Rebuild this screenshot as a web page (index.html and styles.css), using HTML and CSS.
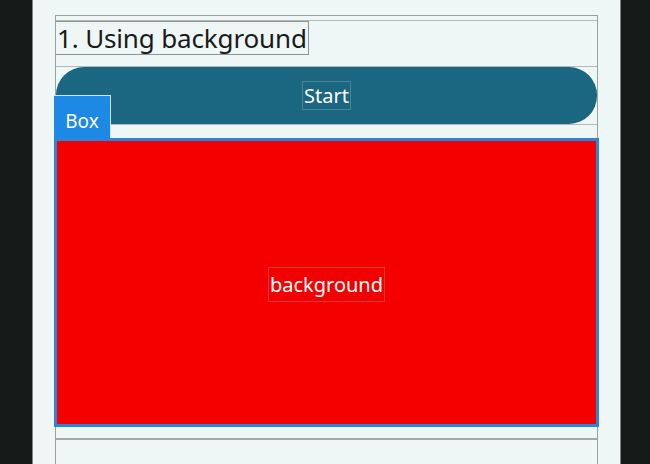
FILE: index.html
```html
<!DOCTYPE html>
<html>
<head>
<meta charset="utf-8">
<link rel="stylesheet" href="styles.css">
</head>
<body>
<div class="phone">
  <div class="column">
    <div class="title-row">
      <div class="title">1. Using background</div>
    </div>
    <div class="btn-row">
      <div class="btn"><span class="btn-text">Start</span></div>
    </div>
    <div class="box-wrap">
      <div class="box-tag">Box</div>
      <div class="box"><span class="box-text">background</span></div>
    </div>
    <div class="next-row"></div>
  </div>
</div>
</body>
</html>
```
FILE: styles.css
```css
html, body {
  margin: 0;
  padding: 0;
}
body {
  width: 650px;
  height: 464px;
  overflow: hidden;
  background: #161b19;
  font-family: "Noto Sans", "Open Sans", sans-serif;
}
.phone {
  margin-left: 32px;
  width: 589px;
  height: 464px;
  background: #eff7f6;
  border-left: 1px solid #7d8381;
  border-right: 1px solid #7d8381;
  padding-top: 15px;
  box-sizing: border-box;
}
.column {
  margin-left: 22px;
  width: 543px;
  height: 470px;
  border: 1px solid #9ba19f;
  border-bottom: none;
  box-sizing: border-box;
  display: flex;
  flex-direction: column;
}
.title-row {
  margin-top: 4px;
  border-top: 1px solid #b3b9b7;
  border-bottom: 1px solid #b3b9b7;
  padding-bottom: 11px;
}
.title {
  display: inline-block;
  height: 34px;
  box-sizing: border-box;
  border: 1px solid #8e9492;
  border-left: none;
  padding: 0 1px 0 1px;
  font-size: 26px;
  line-height: 32px;
  letter-spacing: -0.15px;
  color: #1a1a1a;
}
.btn-row {
  border-bottom: 1px solid #b3b9b7;
}
.btn {
  height: 57px;
  border-radius: 28px;
  background: #1b6680;
  display: flex;
  align-items: center;
  justify-content: center;
}
.btn-text {
  color: #fff;
  font-size: 20px;
  line-height: 27px;
  padding: 0 1px;
  border: 1px solid #4c8497;
}
.box-wrap {
  position: relative;
  margin-top: 13px;
  margin-left: -2px;
  margin-right: -2px;
}
.box {
  height: 289px;
  box-sizing: border-box;
  border: 3px solid #2a86dd;
  background: #f50000;
  display: flex;
  align-items: center;
  justify-content: center;
  padding-top: 4px;
}
.box-text {
  color: #fff;
  font-size: 20px;
  line-height: 33px;
  padding: 0 1px;
  border: 1px solid #d23a3a;
}
.box-tag {
  position: absolute;
  left: 0;
  top: -43px;
  width: 57px;
  height: 43px;
  box-sizing: border-box;
  background: #1e88e5;
  border-top: 1px solid #cfe6fa;
  border-right: 1px solid #cfe6fa;
  color: #fff;
  font-size: 19px;
  line-height: 50px;
  text-align: center;
}
.next-row {
  margin-top: 11px;
  border-top: 2px solid #a3a9a7;
  flex: 1;
}
```
